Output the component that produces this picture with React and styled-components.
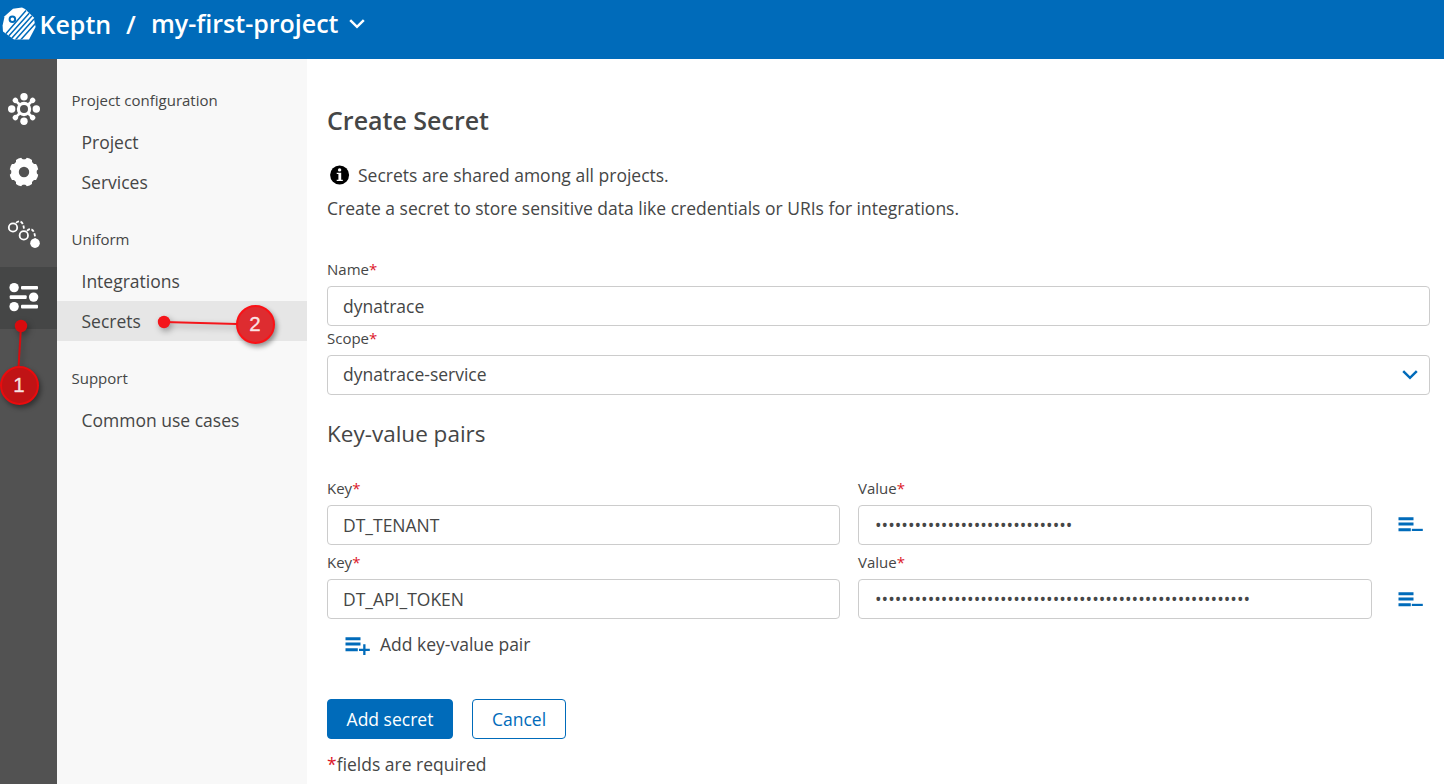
import React from "react";
import styled, { createGlobalStyle } from "styled-components";

const blue = "#006bba";
const ink = "#454646";

const GlobalStyle = createGlobalStyle`
  *, *::before, *::after { box-sizing: border-box; }
  body { margin: 0; background: #fff; overflow: hidden; }
  button, input { font: inherit; color: inherit; }
`;

const Page = styled.div`
  position: relative;
  display: flex;
  flex-direction: column;
  height: 784px;
  overflow: hidden;
  font-family: "Open Sans", sans-serif;
  font-size: 17.5px;
  color: ${ink};
`;

const TopBar = styled.header`
  flex: none;
  display: flex;
  align-items: center;
  height: 59px;
  padding: 0 0 11px 2px;
  background: ${blue};
  color: #fff;
  font-size: 25px;
  font-weight: 600;
  line-height: 48px;
  white-space: pre;
`;

const Brand = styled.span`
  width: 89px;
  padding-left: 2.5px;
`;

const Slash = styled.span`
  width: 25px;
`;

const ProjectName = styled.span`
  width: 198px;
  padding-bottom: 2px;
`;

const Body = styled.div`
  flex: 1;
  display: flex;
  min-height: 0;
`;

const Rail = styled.nav`
  width: 57px;
  padding-top: 20px;
  background: #525252;
`;

const RailItem = styled.a`
  display: flex;
  align-items: center;
  height: 62.5px;
  padding: 0 0 2.5px 6px;
  background: ${(p) => (p.$active ? "#454646" : "transparent")};
  svg { display: block; }
`;

const Menu = styled.aside`
  width: 250px;
  padding-top: 21px;
  background: #f8f8f8;
`;

const MenuGroup = styled.section`
  padding-bottom: 17px;
`;

const MenuTitle = styled.h3`
  margin: 0;
  height: 42px;
  padding-left: 14.5px;
  font-size: 15px;
  font-weight: 400;
  line-height: 41px;
`;

const MenuItem = styled.a`
  display: block;
  height: 40px;
  padding-left: 24.5px;
  line-height: 40px;
  background: ${(p) => (p.$active ? "#e6e6e6" : "transparent")};
`;

const Content = styled.main`
  flex: 1;
  padding: 41px 14px 0 20px;
`;

const Title = styled.h1`
  margin: 0;
  font-size: 25px;
  font-weight: 600;
  line-height: 40px;
`;

const Info = styled.p`
  display: flex;
  align-items: center;
  margin: ${(p) => p.$top || 0}px 0 0;
  height: 33px;
  svg { margin: 0 8px 0 3px; }
`;

const SubTitle = styled.h2`
  margin: 19px 0 25px;
  font-size: 22.5px;
  font-weight: 400;
  line-height: 39px;
`;

const Field = styled.label`
  display: flex;
  flex-direction: column;
  flex: ${(p) => p.$width ? `0 0 ${p.$width}px` : "none"};
`;

const Label = styled.span`
  height: ${(p) => p.$height}px;
  padding-top: ${(p) => p.$height - 27}px;
  font-size: 15px;
  line-height: 20px;
`;

const Star = styled.span`
  color: #dc172a;
`;

const Box = styled.span`
  display: flex;
  align-items: center;
  justify-content: space-between;
  height: 40px;
  padding: 0 11px 0 ${(p) => (p.$secret ? 16 : 15)}px;
  border: 1px solid #ccc;
  border-radius: 4px;
  background: #fff;
  white-space: nowrap;
`;

const Value = styled.span`
  padding-bottom: ${(p) => (p.$raised ? 2 : 0)}px;
`;

const Pair = styled.div`
  display: flex;
  gap: 18px;
`;

const RemoveButton = styled.button`
  align-self: flex-end;
  width: 40px;
  height: 40px;
  padding: ${(p) => (p.$drop ? 2 : 0)}px 0 0 8px;
  border: 0;
  background: none;
  svg { display: block; }
`;

const AddPair = styled.div`
  display: flex;
  align-items: center;
  gap: 10px;
  height: 40px;
  margin-top: 5px;
  padding-left: 18px;
  svg { margin-top: 1px; }
`;

const Actions = styled.div`
  display: flex;
  gap: 19px;
  margin-top: 35px;
`;

const Button = styled.button`
  width: ${(p) => p.$width}px;
  height: 40px;
  padding: 0;
  border: 1px solid ${blue};
  border-radius: 4px;
  background: ${(p) => (p.$primary ? blue : "#fff")};
  color: ${(p) => (p.$primary ? "#fff" : blue)};
  font-weight: ${(p) => (p.$primary ? 500 : 400)};
`;

const Footnote = styled.p`
  margin: 5px 0 0;
  line-height: 40px;
`;

const Leader = styled.svg`
  position: absolute;
  left: 0;
  top: 0;
  overflow: visible;
  filter: drop-shadow(2px 3px 3px rgba(0, 0, 0, 0.35));
`;

const Badge = styled.span`
  position: absolute;
  left: ${(p) => p.$x - 19.5}px;
  top: ${(p) => p.$y - 19.5}px;
  width: 39px;
  height: 39px;
  border: 2px solid ${(p) => p.$edge};
  border-radius: 50%;
  background: ${(p) => p.$fill};
  box-shadow: 2px 3px 5px rgba(0, 0, 0, 0.4);
  color: rgba(255, 255, 255, 0.85);
  font: 400 20.5px/33px "Liberation Sans", sans-serif;
  -webkit-text-stroke: 0.4px rgba(255, 255, 255, 0.7);
  text-align: center;
`;

function KeptnLogo() {
  return (
    <svg width="35" height="34" viewBox="0 0 35 34">
      <defs>
        <clipPath id="hull">
          <path d="M11 1.8 20 .6 23 2 31.6 10.2 33.6 20 27 32.6 12 32.6 1 24.5.6 18.5 2.6 9.2Z" />
        </clipPath>
      </defs>
      <g clipPath="url(#hull)">
        <rect width="35" height="34" fill="#fff" />
        <g stroke={blue} strokeWidth="1.5" fill="none">
          <path d="M2.6 28.2 24 3.6M5.4 30.6 27.4 6M8.6 32.6 30 8.8M12 34.4 32 12M16.6 35.2 33.6 16.2" />
          <circle cx="10.4" cy="12.3" r="2.8" fill="#fff" strokeWidth="2" />
        </g>
      </g>
    </svg>
  );
}

function HubIcon() {
  return (
    <svg width="36" height="36" viewBox="-18 -18 36 36" fill="#fff">
      <circle r="5.6" fill="none" stroke="#fff" strokeWidth="3.2" />
      {[0, 90, 180, 270].map((a) => (
        <circle key={a} cy="-12.3" r="3.7" transform={`rotate(${a})`} />
      ))}
      {[45, 135, 225, 315].map((a) => (
        <g key={a} transform={`rotate(${a})`}>
          <path d="M-1.3-6h2.6v-5h-2.6z" />
          <circle cy="-12.2" r="2.7" />
        </g>
      ))}
    </svg>
  );
}

function GearIcon() {
  return (
    <svg width="36" height="36" viewBox="-18 -18 36 36" fill="#fff">
      <circle r="9" fill="none" stroke="#fff" strokeWidth="7.6" />
      {[22.5, 67.5, 112.5, 157.5, 202.5, 247.5, 292.5, 337.5].map((a) => (
        <path key={a} d="M-3.9-11.5-2.8-14.2Q0-15 2.8-14.2L3.9-11.5Z" transform={`rotate(${a})`} />
      ))}
    </svg>
  );
}

function SequenceIcon() {
  return (
    <svg width="36" height="36" viewBox="0 0.8 36 36" fill="none" stroke="#fff" strokeWidth="1.8">
      <circle cx="7" cy="12.3" r="4.2" />
      <circle cx="17.8" cy="20.2" r="4.2" />
      <path d="M10 7.7C13.5 4.6 17.8 6 18 15M21 15.7C24.5 12 28.8 14 29.2 23.5" strokeDasharray="3.4 1.5" />
      <circle cx="29" cy="28" r="4.8" fill="#fff" stroke="none" />
    </svg>
  );
}

function UniformIcon() {
  return (
    <svg width="36" height="36" viewBox="0 0 36 36" fill="#fff">
      <circle cx="8.1" cy="8.6" r="4.7" />
      <rect x="15" y="6.9" width="17" height="3.6" rx="1" />
      <rect x="3.7" y="16.3" width="17" height="3.6" rx="1" />
      <circle cx="27.6" cy="18.1" r="4.7" />
      <circle cx="8.1" cy="27.6" r="4.7" />
      <rect x="15" y="25.8" width="17" height="3.6" rx="1" />
    </svg>
  );
}

function InfoIcon() {
  return (
    <svg width="20" height="20" viewBox="0 0 20 20">
      <circle cx="9.6" cy="10" r="9.5" fill="#000" />
      <g fill="#fff">
        <circle cx="9.6" cy="4.9" r="1.7" />
        <path d="M6.7 7.7h4.5v7h1.6v1.4H6.7v-1.4h1.7V9.1H6.7z" />
      </g>
    </svg>
  );
}

function Chevron({ color, width = 16 }) {
  return (
    <svg width={width} height="10" viewBox="0 0 16 10" fill="none" stroke={color} strokeWidth="2.5">
      <path d="M1.2 1.2 8 7.8 14.8 1.2" />
    </svg>
  );
}

function ListIcon({ plus }) {
  return (
    <svg width="25" height="20" viewBox="0 0 25 20" fill={blue}>
      <path d="M.5 2.2h15v3H.5zM.5 7.6h15v3H.5zM.5 13.2h12.3v3H.5z" />
      <path d={plus ? "M14 13.7h4.2V9.2h2.3v4.5h4.3V16h-4.3v4.3h-2.3V16H14z" : "M13.8 13.8h11v2.2h-11z"} />
    </svg>
  );
}

function TextField({ label, value, width, height = 30, secret, raised, children }) {
  return (
    <Field $width={width}>
      <Label $height={height}>{label}<Star>*</Star></Label>
      <Box $secret={secret}><Value $raised={raised}>{value}</Value>{children}</Box>
    </Field>
  );
}

const pairs = [
  { key: "DT_TENANT", length: 30, labelHeight: 27 },
  { key: "DT_API_TOKEN", length: 57, labelHeight: 34 },
];

const railIcons = [HubIcon, GearIcon, SequenceIcon, UniformIcon];

const menu = [
  { title: "Project configuration", items: ["Project", "Services"] },
  { title: "Uniform", items: ["Integrations", "Secrets"] },
  { title: "Support", items: ["Common use cases"] },
];

export default function App() {
  return (
    <Page>
      <GlobalStyle />
      <TopBar>
        <KeptnLogo />
        <Brand>Keptn</Brand>
        <Slash>/</Slash>
        <ProjectName>my-first-project</ProjectName>
        <Chevron color="#fff" />
      </TopBar>
      <Body>
        <Rail>
          {railIcons.map((Icon, i) => (
            <RailItem key={i} $active={i === 3}><Icon /></RailItem>
          ))}
        </Rail>
        <Menu>
          {menu.map((group) => (
            <MenuGroup key={group.title}>
              <MenuTitle>{group.title}</MenuTitle>
              {group.items.map((item) => (
                <MenuItem key={item} $active={item === "Secrets"}>{item}</MenuItem>
              ))}
            </MenuGroup>
          ))}
        </Menu>
        <Content>
          <Title>Create Secret</Title>
          <Info $top={18}><InfoIcon />Secrets are shared among all projects.</Info>
          <Info>Create a secret to store sensitive data like credentials or URIs for integrations.</Info>
          <TextField label="Name" value="dynatrace" height={62} />
          <TextField label="Scope" value="dynatrace-service" height={29} raised>
            <Chevron color={blue} />
          </TextField>
          <SubTitle>Key-value pairs</SubTitle>
          {pairs.map((pair, i) => (
            <Pair key={pair.key}>
              <TextField label="Key" value={pair.key} width={513} height={pair.labelHeight} />
              <TextField label="Value" value={"•".repeat(pair.length)} width={514} height={pair.labelHeight} secret />
              <RemoveButton $drop={i > 0}><ListIcon /></RemoveButton>
            </Pair>
          ))}
          <AddPair><ListIcon plus />Add key-value pair</AddPair>
          <Actions>
            <Button $primary $width={126}>Add secret</Button>
            <Button $width={94}>Cancel</Button>
          </Actions>
          <Footnote><Star>*</Star>fields are required</Footnote>
        </Content>
      </Body>
      <Leader width="300" height="420">
        <path d="M21 326 18.5 368" stroke="#d90b0e" strokeWidth="2" />
        <circle cx="21" cy="326" r="6.2" fill="#d90b0e" />
        <path d="M164 322 237 324" stroke="#f4161b" strokeWidth="2" />
        <circle cx="164" cy="322" r="6.2" fill="#f4161b" />
      </Leader>
      <Badge $x={19} $y={385} $edge="#ea0b0d" $fill="#c01315">1</Badge>
      <Badge $x={255} $y={324} $edge="#fb1116" $fill="#de2c30">2</Badge>
    </Page>
  );
}
